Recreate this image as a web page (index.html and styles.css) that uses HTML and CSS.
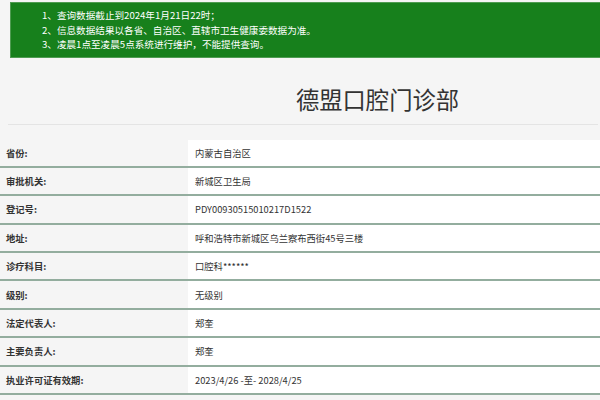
FILE: index.html
```html
<!DOCTYPE html>
<html lang="zh-CN">
<head>
<meta charset="utf-8">
<title>德盟口腔门诊部</title>
<link rel="stylesheet" href="styles.css">
</head>
<body>
<div class="notice">
  <p>1、查询数据截止到2024年1月21日22时；</p>
  <p>2、信息数据结果以各省、自治区、直辖市卫生健康委数据为准。</p>
  <p>3、凌晨1点至凌晨5点系统进行维护，不能提供查询。</p>
</div>
<h1 class="title">德盟口腔门诊部</h1>
<div class="info">
  <div class="row"><div class="label">省份:</div><div class="value">内蒙古自治区</div></div>
  <div class="row"><div class="label">审批机关:</div><div class="value">新城区卫生局</div></div>
  <div class="row"><div class="label">登记号:</div><div class="value">PDY00930515010217D1522</div></div>
  <div class="row"><div class="label">地址:</div><div class="value">呼和浩特市新城区乌兰察布西街45号三楼</div></div>
  <div class="row"><div class="label">诊疗科目:</div><div class="value">口腔科******</div></div>
  <div class="row"><div class="label">级别:</div><div class="value">无级别</div></div>
  <div class="row"><div class="label">法定代表人:</div><div class="value">郑奎</div></div>
  <div class="row"><div class="label">主要负责人:</div><div class="value">郑奎</div></div>
  <div class="row"><div class="label">执业许可证有效期:</div><div class="value">2023/4/26 -至- 2028/4/25</div></div>
</div>
</body>
</html>
```

FILE: styles.css
```css
html, body {
  margin: 0;
  padding: 0;
}
body {
  background: #f5f5f5;
  color: #333;
  font-family: "Noto Sans CJK SC", "Noto Sans", sans-serif;
  overflow: hidden;
}
.notice {
  margin: 2px 0 0 10px;
  background: #17801c;
  border: 1px solid #4f9c52;
  border-right: none;
  color: #fff;
  font-size: 9.6px;
  line-height: 14.5px;
  padding: 5px 0 5px 31px;
  height: 43.5px;
}
.notice p {
  margin: 0;
  white-space: nowrap;
}
.title {
  margin: 0 2px 0 8px;
  height: 67px;
  border-bottom: 1px solid #e4e4e4;
  display: flex;
  align-items: center;
  justify-content: center;
  padding-left: 149px;
  padding-top: 16px;
  box-sizing: border-box;
  font-size: 23.3px;
  font-weight: normal;
  color: #333;
  letter-spacing: 0;
}
.info {
  margin-top: 15px;
}
.row {
  display: grid;
  grid-template-columns: 188px 1fr;
  height: 28.4px;
  box-sizing: border-box;
  border-bottom: 2px solid #93ad9e;
  font-size: 9.3px;
}
.label {
  background: #f5f5f5;
  font-weight: bold;
  padding-left: 6px;
  display: flex;
  align-items: center;
}
.value {
  background: #fff;
  padding-left: 7px;
  display: flex;
  align-items: center;
}
```
